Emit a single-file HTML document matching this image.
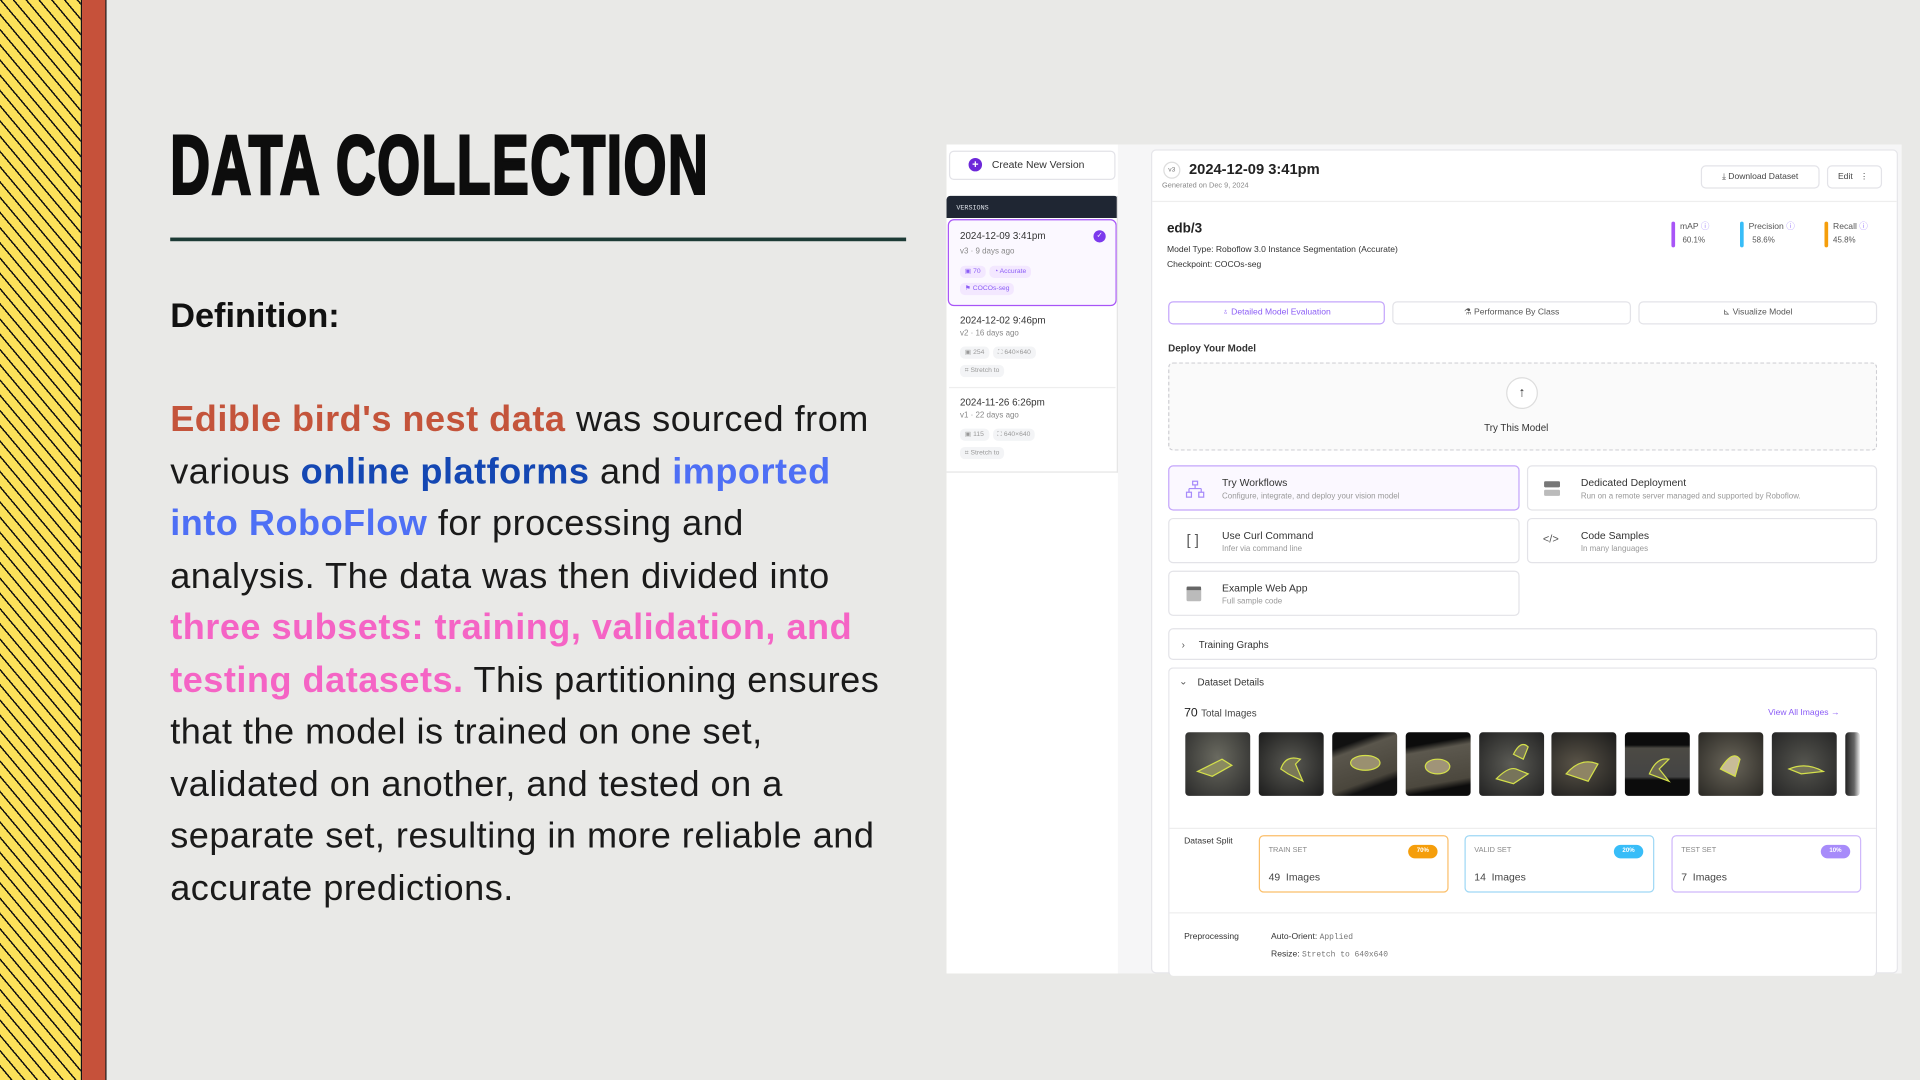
<!DOCTYPE html>
<html><head><meta charset="utf-8">
<style>
*{margin:0;padding:0;box-sizing:border-box}
html,body{width:1920px;height:1080px;overflow:hidden;background:#e8e8e6}
#s{position:absolute;left:0;top:0;width:1568px;height:882px;transform:scale(1.2244898);transform-origin:0 0;font-family:"Liberation Sans",sans-serif;background:#e9e9e7}
.a{position:absolute}
.stripe{left:0;top:0;width:67px;height:882px;background:repeating-linear-gradient(50deg,#fce15a 0,#fce15a 6.8px,#111 6.8px,#111 8px);border-right:1.5px solid #111}
.red{left:67px;top:0;width:20px;height:882px;background:#c6513a;border-right:1.5px solid #222}
.title{left:139px;top:96px;font-size:68px;font-weight:700;letter-spacing:2px;color:#0d0d0d;transform:scaleX(.66);transform-origin:0 0;white-space:nowrap;-webkit-text-stroke:2.5px #0d0d0d}
.rule{left:139px;top:194px;width:601px;height:2.5px;background:#1d3b36}
.def{left:139px;top:242px;font-size:28px;font-weight:700;color:#111}
.body{left:139px;top:322px;font-size:29.5px;line-height:42.5px;color:#1a1a1a;white-space:nowrap;letter-spacing:.4px}
.body b{font-weight:700}
.o{color:#c4543b}.b1{color:#1447b3}.b2{color:#4e6ff5}.p{color:#f564c5}
.ui{font-family:"Liberation Sans",sans-serif;color:#222}
.side{left:773px;top:118px;width:140px;height:677px;background:#fff}
.main{left:913px;top:118px;width:640px;height:677px;background:#f6f6f7}
.card{left:940px;top:122px;width:610px;height:673px;background:#fff;border:1px solid #e6e6ea;border-radius:4px}
.btn{background:#fff;border:1px solid #e3e3e8;border-radius:4px}
.t7{font-size:7px;color:#888}
.chips{line-height:10px;font-size:5.5px}
.chip{display:inline-block;background:#f3e8ff;color:#8b5cf6;font-size:5.5px;line-height:6px;padding:2px 4px;border-radius:4px;margin-right:3px}
.chipg{display:inline-block;background:#f3f4f6;color:#999;font-size:5.5px;line-height:6px;padding:2px 4px;border-radius:4px;margin-right:3px}
.dc{background:#fff;border:1px solid #e3e3e8;border-radius:4px}
.dc .h{position:absolute;left:43px;top:8px;font-size:8.5px;color:#333}
.dc .s{position:absolute;left:43px;top:21px;font-size:6.5px;color:#999}
.thumb{position:absolute;top:598px;width:53px;height:52px;border-radius:3px;overflow:hidden}
.split{position:absolute;top:682px;width:155px;height:47px;border-radius:4px;background:#fff}
.split .l{position:absolute;left:7px;top:9px;font-size:6px;color:#888}
.split .n{position:absolute;left:7px;top:28px;font-size:8.5px;color:#444}
.split .pc{position:absolute;right:8px;top:7px;width:24px;height:11px;border-radius:6px;color:#fff;font-size:5px;text-align:center;line-height:11px;font-weight:700}
</style></head><body>
<div id="s">
<div class="a stripe"></div><div class="a red"></div>
<div class="a title">DATA COLLECTION</div>
<div class="a rule"></div>
<div class="a def">Definition:</div>
<div class="a body"><b class="o">Edible bird's nest data</b> was sourced from<br>various <b class="b1">online platforms</b> and <b class="b2">imported</b><br><b class="b2">into RoboFlow</b> for processing and<br>analysis. The data was then divided into<br><b class="p">three subsets: training, validation, and</b><br><b class="p">testing datasets.</b> This partitioning ensures<br>that the model is trained on one set,<br>validated on another, and tested on a<br>separate set, resulting in more reliable and<br>accurate predictions.</div>

<div class="ui">
<div class="a side"></div>
<div class="a main"></div>
<div class="a btn" style="left:775px;top:123px;width:136px;height:24px"></div>
<div class="a" style="left:791px;top:129px;width:11px;height:11px;border-radius:50%;background:#6d28d9;color:#fff;font-size:9px;line-height:11px;text-align:center;font-weight:700">+</div>
<div class="a" style="left:810px;top:129px;font-size:8.5px;color:#333">Create New Version</div>
<div class="a" style="left:773px;top:160px;width:140px;height:18px;background:#1f2633;border-radius:3px 3px 0 0;color:#dfe3ea;font-size:5.5px;padding:6px 0 0 8px;font-family:'Liberation Mono',monospace">VERSIONS</div>
<div class="a" style="left:774px;top:179px;width:138px;height:71px;border:1.5px solid #a855f7;border-radius:5px;background:#fbf8ff"></div>
<div class="a" style="left:784px;top:188px;font-size:8px;color:#333">2024-12-09 3:41pm</div>
<div class="a" style="left:893px;top:188px;width:10px;height:10px;border-radius:50%;background:#7c3aed;color:#fff;font-size:6px;line-height:10px;text-align:center">✓</div>
<div class="a t7" style="left:784px;top:202px;font-size:6.5px">v3 · 9 days ago</div>
<div class="a chips" style="left:784px;top:217px"><span class="chip">▣ 70</span><span class="chip">◔ Accurate</span></div>
<div class="a chips" style="left:784px;top:231px"><span class="chip">⚑ COCOs-seg</span></div>
<div class="a" style="left:784px;top:257px;font-size:8px;color:#333">2024-12-02 9:46pm</div>
<div class="a t7" style="left:784px;top:269px;font-size:6.5px">v2 · 16 days ago</div>
<div class="a chips" style="left:784px;top:283px"><span class="chipg">▣ 254</span><span class="chipg">⛶ 640×640</span></div>
<div class="a chips" style="left:784px;top:298px"><span class="chipg">⌗ Stretch to</span></div>
<div class="a" style="left:775px;top:316px;width:136px;height:1px;background:#eee"></div>
<div class="a" style="left:784px;top:324px;font-size:8px;color:#333">2024-11-26 6:26pm</div>
<div class="a t7" style="left:784px;top:336px;font-size:6.5px">v1 · 22 days ago</div>
<div class="a chips" style="left:784px;top:350px"><span class="chipg">▣ 115</span><span class="chipg">⛶ 640×640</span></div>
<div class="a chips" style="left:784px;top:365px"><span class="chipg">⌗ Stretch to</span></div>
<div class="a" style="left:773px;top:385px;width:140px;height:1px;background:#e5e5e5"></div>
<div class="a" style="left:912px;top:160px;width:1px;height:226px;background:#e5e5e5"></div>

<div class="a card"></div>
<div class="a" style="left:950px;top:132px;width:14px;height:14px;border:1px solid #ddd;border-radius:50%;font-size:5.5px;color:#777;text-align:center;line-height:12px">v3</div>
<div class="a" style="left:971px;top:131px;font-size:12px;font-weight:700;color:#222">2024-12-09 3:41pm</div>
<div class="a" style="left:949px;top:149px;font-size:6px;color:#888">Generated on Dec 9, 2024</div>
<div class="a btn" style="left:1389px;top:135px;width:97px;height:19px;font-size:7px;color:#444;text-align:center;line-height:17px">⤓ Download Dataset</div>
<div class="a btn" style="left:1492px;top:135px;width:45px;height:19px;font-size:7px;color:#444;padding-left:8px;line-height:17px">Edit &nbsp;&nbsp;⋮</div>
<div class="a" style="left:941px;top:164px;width:608px;height:1px;background:#eee"></div>
<div class="a" style="left:953px;top:181px;font-size:11px;font-weight:700;color:#222">edb/3</div>
<div class="a" style="left:953px;top:201px;font-size:7px;color:#333">Model Type: Roboflow 3.0 Instance Segmentation (Accurate)</div>
<div class="a" style="left:953px;top:213px;font-size:7px;color:#333">Checkpoint: COCOs-seg</div>
<div class="a" style="left:1365px;top:181px;width:2.5px;height:21px;background:#a855f7;border-radius:2px"></div>
<div class="a" style="left:1372px;top:180px;font-size:7px;color:#555">mAP <span style="color:#a78bfa">ⓘ</span></div>
<div class="a" style="left:1374px;top:193px;font-size:6.5px;color:#555">60.1%</div>
<div class="a" style="left:1421px;top:181px;width:2.5px;height:21px;background:#38bdf8;border-radius:2px"></div>
<div class="a" style="left:1428px;top:180px;font-size:7px;color:#555">Precision <span style="color:#a78bfa">ⓘ</span></div>
<div class="a" style="left:1431px;top:193px;font-size:6.5px;color:#555">58.6%</div>
<div class="a" style="left:1490px;top:181px;width:2.5px;height:21px;background:#f59e0b;border-radius:2px"></div>
<div class="a" style="left:1497px;top:180px;font-size:7px;color:#555">Recall <span style="color:#a78bfa">ⓘ</span></div>
<div class="a" style="left:1497px;top:193px;font-size:6.5px;color:#555">45.8%</div>

<div class="a btn" style="left:954px;top:246px;width:177px;height:19px;border-color:#c4a5fb;font-size:7px;color:#8b5cf6;text-align:center;line-height:17px">♁ Detailed Model Evaluation</div>
<div class="a btn" style="left:1137px;top:246px;width:195px;height:19px;font-size:7px;color:#555;text-align:center;line-height:17px">⚗ Performance By Class</div>
<div class="a btn" style="left:1338px;top:246px;width:195px;height:19px;font-size:7px;color:#555;text-align:center;line-height:17px">⊾ Visualize Model</div>

<div class="a" style="left:954px;top:280px;font-size:8px;font-weight:700;color:#333">Deploy Your Model</div>
<div class="a" style="left:954px;top:296px;width:579px;height:72px;border:1px dashed #cfcfd4;border-radius:4px;background:#fafafa"></div>
<div class="a" style="left:1230px;top:308px;width:26px;height:26px;border:1px solid #ddd;border-radius:50%;background:#fff;text-align:center;font-size:11px;line-height:24px;color:#333">↑</div>
<div class="a" style="left:1212px;top:345px;font-size:8px;color:#333">Try This Model</div>

<div class="a dc" style="left:954px;top:380px;width:287px;height:37px;border-color:#c4a5fb;background:#fbf8ff"><svg class="a" style="left:13px;top:11px" width="16" height="15" viewBox="0 0 16 15" fill="none" stroke="#a78bfa" stroke-width="1"><rect x="6" y="1" width="4" height="3"/><path d="M8 4v3M3 7h10M3 7v3M13 7v3"/><rect x="1" y="10" width="4" height="4"/><rect x="11" y="10" width="4" height="4"/></svg><div class="h">Try Workflows</div><div class="s">Configure, integrate, and deploy your vision model</div></div>
<div class="a dc" style="left:1247px;top:380px;width:286px;height:37px"><div class="a" style="left:13px;top:12px;width:13px;height:5px;background:#777;border-radius:1px"></div><div class="a" style="left:13px;top:19px;width:13px;height:5px;background:#bbb;border-radius:1px"></div><div class="h">Dedicated Deployment</div><div class="s">Run on a remote server managed and supported by Roboflow.</div></div>
<div class="a dc" style="left:954px;top:423px;width:287px;height:37px"><div class="a" style="left:14px;top:10px;font-size:12px;color:#555">[ ]</div><div class="h">Use Curl Command</div><div class="s">Infer via command line</div></div>
<div class="a dc" style="left:1247px;top:423px;width:286px;height:37px"><div class="a" style="left:12px;top:11px;font-size:9px;color:#555">&lt;/&gt;</div><div class="h">Code Samples</div><div class="s">In many languages</div></div>
<div class="a dc" style="left:954px;top:466px;width:287px;height:37px"><div class="a" style="left:14px;top:12px;width:12px;height:12px;background:#bbb;border-top:3px solid #666;border-radius:1px"></div><div class="h">Example Web App</div><div class="s">Full sample code</div></div>

<div class="a dc" style="left:954px;top:513px;width:579px;height:26px"><div class="a" style="left:10px;top:8px;font-size:8px;color:#555">›</div><div class="a" style="left:24px;top:8px;font-size:8px;color:#333">Training Graphs</div></div>
<div class="a dc" style="left:954px;top:545px;width:579px;height:252px;border-bottom:none"></div>
<div class="a" style="left:963px;top:552px;font-size:8px;color:#555">⌄</div>
<div class="a" style="left:978px;top:553px;font-size:8px;color:#333">Dataset Details</div>
<div class="a" style="left:967px;top:577px;font-size:10px;color:#222">70 <span style="font-size:8px;color:#444">Total Images</span></div>
<div class="a" style="left:1444px;top:579px;font-size:7px;color:#8b5cf6">View All Images →</div>

<div class="thumb" style="left:968px;background:radial-gradient(ellipse at 50% 40%,#6a6a60,#2a2a2a)"><svg width="53" height="52"><path d="M10 32 L30 22 L38 27 L22 36 Z" fill="#8a8a60" stroke="#d4e04a" stroke-width="1"/></svg></div>
<div class="thumb" style="left:1028px;background:radial-gradient(ellipse at 50% 50%,#5a5a54,#1c1c1c)"><svg width="53" height="52"><path d="M18 30 Q22 18 34 22 L30 26 L36 40 L24 34 Z" fill="#7a7858" stroke="#d4e04a" stroke-width="1"/></svg></div>
<div class="thumb" style="left:1088px;background:linear-gradient(160deg,#111 20%,#5a564c 30%,#4a463c 70%,#111 80%)"><svg width="53" height="52"><ellipse cx="27" cy="25" rx="12" ry="6" fill="#9a9070" stroke="#d4e04a" stroke-width="1"/></svg></div>
<div class="thumb" style="left:1148px;background:linear-gradient(170deg,#0c0c0c 20%,#5c584e 30%,#4c483e 75%,#0c0c0c 85%)"><svg width="53" height="52"><ellipse cx="26" cy="28" rx="10" ry="6" fill="#a09478" stroke="#d4e04a" stroke-width="1"/></svg></div>
<div class="thumb" style="left:1208px;background:radial-gradient(ellipse at 50% 50%,#5c5c56,#222)"><svg width="53" height="52"><path d="M14 38 Q24 28 30 30 L40 34 L28 42 Z M28 18 Q34 6 40 12 L36 22 Z" fill="#77745a" stroke="#d4e04a" stroke-width="1"/></svg></div>
<div class="thumb" style="left:1267px;background:radial-gradient(ellipse at 40% 50%,#5a5448,#1a1a1a)"><svg width="53" height="52"><path d="M12 34 Q24 20 38 26 L30 40 Z" fill="#8e8464" stroke="#d4e04a" stroke-width="1"/></svg></div>
<div class="thumb" style="left:1327px;background:linear-gradient(#0c0c0c 20%,#4c4a44 25%,#444 70%,#0c0c0c 75%)"><svg width="53" height="52"><path d="M20 34 Q26 20 36 22 L28 30 L36 40 Z" fill="#6e6a54" stroke="#d4e04a" stroke-width="1"/></svg></div>
<div class="thumb" style="left:1387px;background:radial-gradient(ellipse at 50% 50%,#6a665a,#2a2824)"><svg width="53" height="52"><path d="M18 30 Q28 14 34 22 L30 36 Z" fill="#c8bc98" stroke="#d4e04a" stroke-width="1"/></svg></div>
<div class="thumb" style="left:1447px;background:radial-gradient(ellipse at 50% 50%,#55554f,#262626)"><svg width="53" height="52"><path d="M14 30 Q28 24 42 32 L24 34 Z" fill="#747258" stroke="#d4e04a" stroke-width="1"/></svg></div>
<div class="thumb" style="left:1507px;width:12px;background:linear-gradient(90deg,#222,#666 60%,#eee)"></div>

<div class="a" style="left:955px;top:676px;width:577px;height:1px;background:#eee"></div>
<div class="a" style="left:967px;top:684px;font-size:7px;color:#333">Dataset Split</div>
<div class="split" style="left:1028px;border:1px solid #fbbf6a"><div class="l">TRAIN SET</div><div class="pc" style="background:#f59e0b">70%</div><div class="n">49 &nbsp;Images</div></div>
<div class="split" style="left:1196px;border:1px solid #9fd8f5"><div class="l">VALID SET</div><div class="pc" style="background:#38bdf8">20%</div><div class="n">14 &nbsp;Images</div></div>
<div class="split" style="left:1365px;border:1px solid #cfb8fb"><div class="l">TEST SET</div><div class="pc" style="background:#a78bfa">10%</div><div class="n">7 &nbsp;Images</div></div>
<div class="a" style="left:955px;top:745px;width:577px;height:1px;background:#eee"></div>
<div class="a" style="left:967px;top:762px;font-size:7px;color:#333">Preprocessing</div>
<div class="a" style="left:1038px;top:762px;font-size:7px;color:#333">Auto-Orient: <span style="font-family:'Liberation Mono',monospace;color:#777;font-size:6.5px">Applied</span></div>
<div class="a" style="left:1038px;top:776px;font-size:7px;color:#333">Resize: <span style="font-family:'Liberation Mono',monospace;color:#777;font-size:6.5px">Stretch to 640x640</span></div>
</div>
</div>
</body></html>
